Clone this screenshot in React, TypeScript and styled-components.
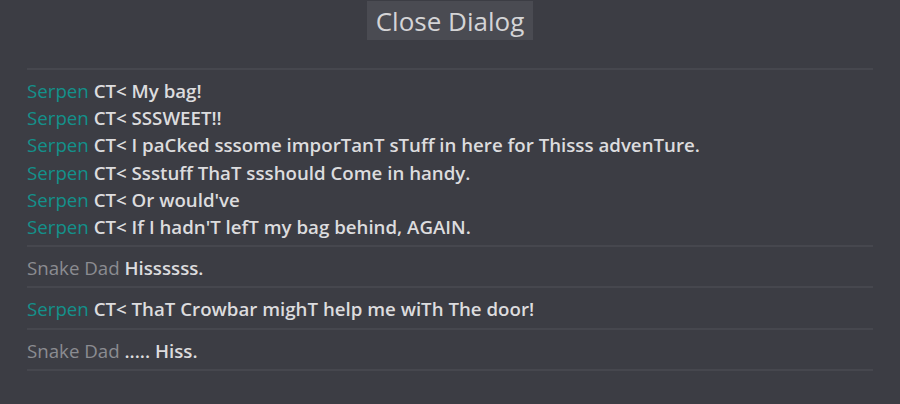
import * as React from 'react';
import styled, { createGlobalStyle } from 'styled-components';

const GlobalStyle = createGlobalStyle`
  html, body {
    margin: 0;
    padding: 0;
    background: #3c3d44;
  }
  body {
    font-family: "Open Sans", "Liberation Sans", sans-serif;
  }
`;

const Page = styled.div`
  width: 900px;
  height: 404px;
  background: #3c3d44;
  padding-top: 1px;
  box-sizing: border-box;
  overflow: hidden;
`;

const Header = styled.div`
  display: flex;
  justify-content: center;
`;

const CloseButton = styled.button`
  height: 39px;
  width: 166px;
  padding: 0;
  border: none;
  background: #4a4b52;
  color: #d4d4d6;
  font-family: "Open Sans", "Liberation Sans", sans-serif;
  font-size: 26px;
  font-weight: 400;
  cursor: pointer;
`;

const Log = styled.div`
  margin: 28px 27px 0;
  border-bottom: 2px solid #46474e;
`;

const Group = styled.div`
  border-top: 2px solid #46474e;
  padding: 7px 0 5px;
`;

const Line = styled.div`
  font-size: 18.7px;
  line-height: 27.2px;
  font-weight: 600;
  color: #dcdcde;
  white-space: nowrap;
`;

const Speaker = styled.span<{ $tone: 'teal' | 'grey' }>`
  font-weight: 400;
  color: ${p => (p.$tone === 'teal' ? '#13918b' : '#8b8c91')};
`;

interface Entry {
    who: string;
    tone: 'teal' | 'grey';
    lines: string[];
}

const log: Entry[] = [
    {
        who: 'Serpen',
        tone: 'teal',
        lines: [
            'CT< My bag!',
            'CT< SSSWEET!!',
            'CT< I paCked sssome imporTanT sTuff in here for Thisss advenTure.',
            'CT< Ssstuff ThaT ssshould Come in handy.',
            "CT< Or would've",
            "CT< If I hadn'T lefT my bag behind, AGAIN.",
        ],
    },
    { who: 'Snake Dad', tone: 'grey', lines: ['Hissssss.'] },
    { who: 'Serpen', tone: 'teal', lines: ['CT< ThaT Crowbar mighT help me wiTh The door!'] },
    { who: 'Snake Dad', tone: 'grey', lines: ['..... Hiss.'] },
];

function App() {
    return (
        <Page>
            <GlobalStyle/>
            <Header>
                <CloseButton>Close Dialog</CloseButton>
            </Header>
            <Log>
                {log.map((entry, i) => (
                    <Group key={i}>
                        {entry.lines.map((text, j) => (
                            <Line key={j}>
                                <Speaker $tone={entry.tone}>{entry.who}</Speaker> {text}
                            </Line>
                        ))}
                    </Group>
                ))}
            </Log>
        </Page>
    );
}

export default App;
